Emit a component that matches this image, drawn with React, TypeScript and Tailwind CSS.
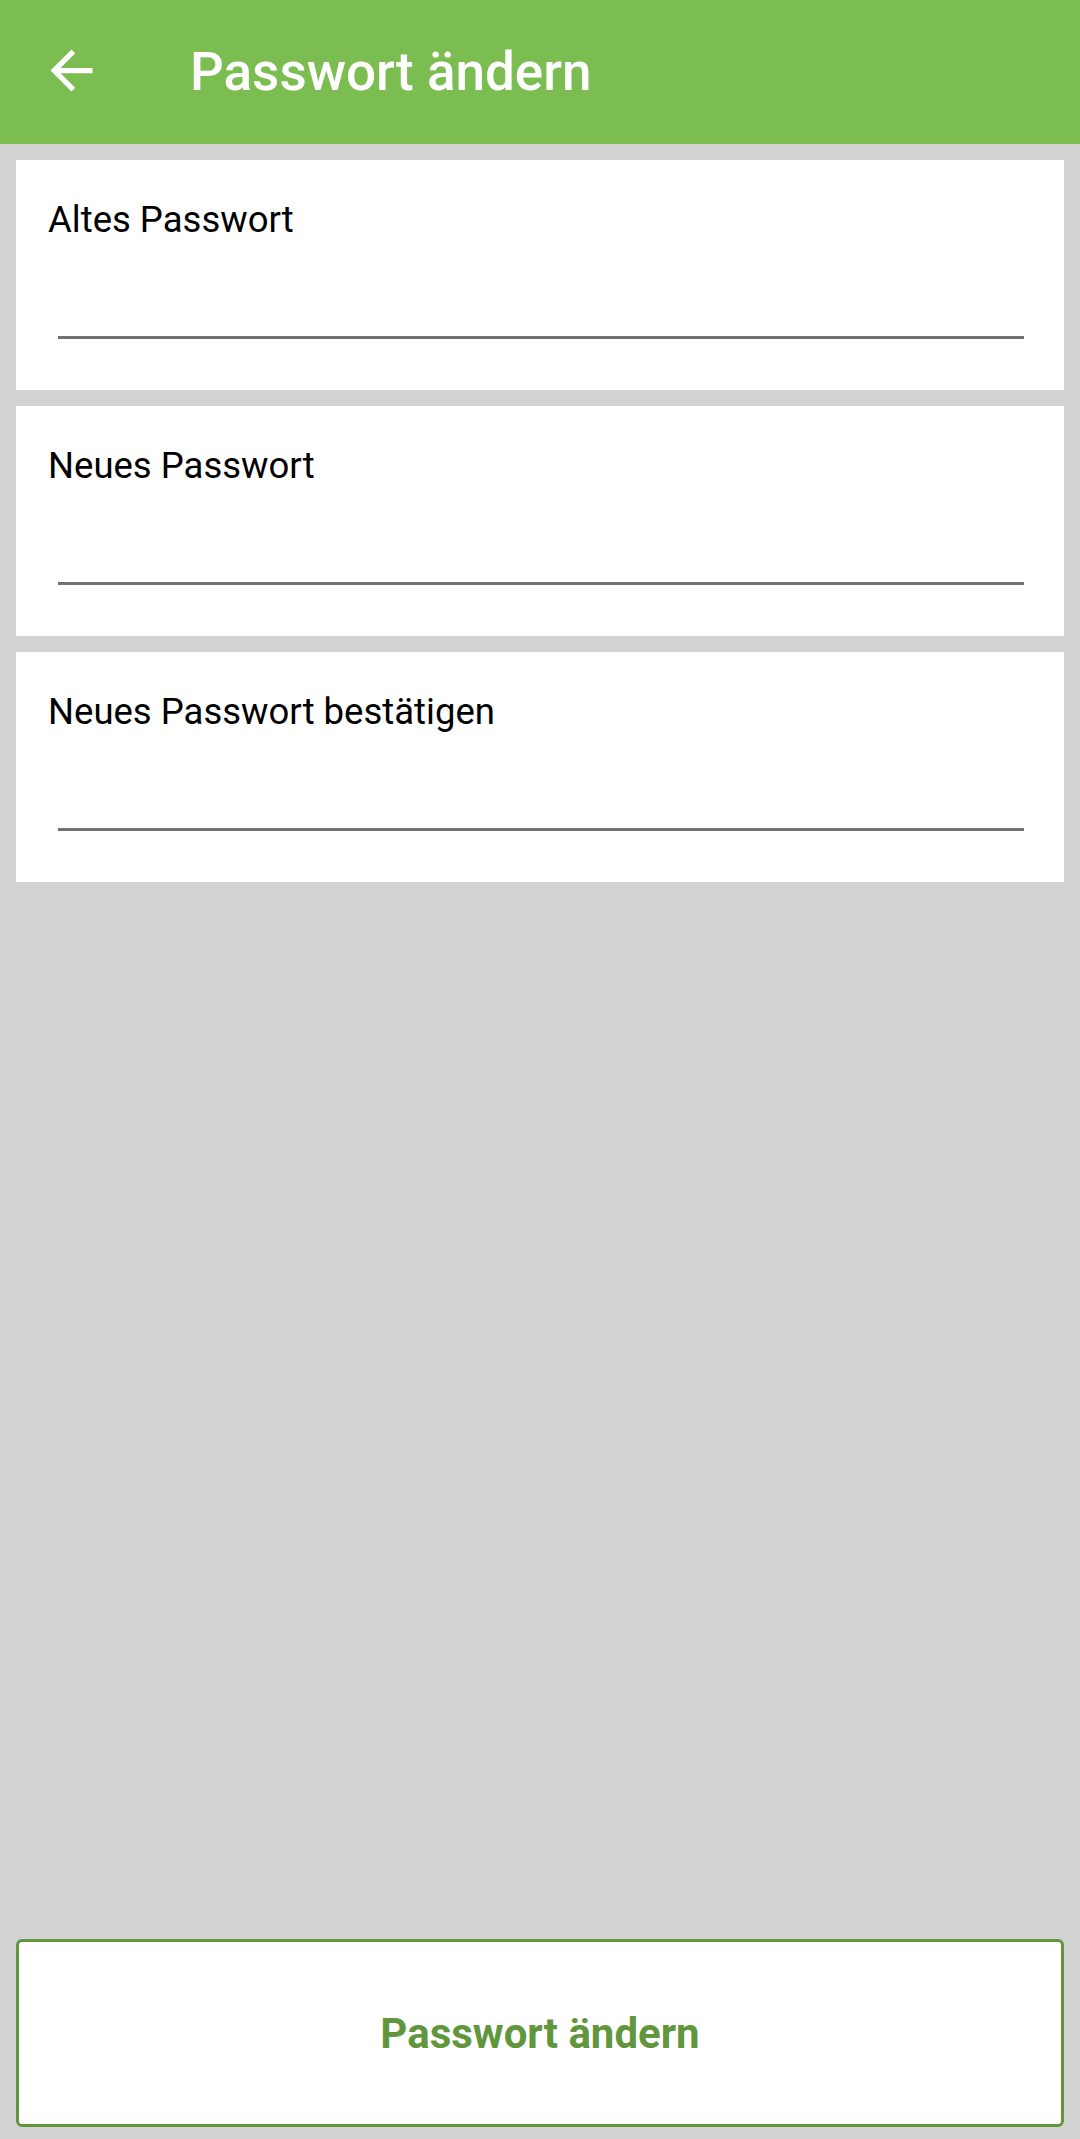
import React from "react";

const fields = ["Altes Passwort", "Neues Passwort", "Neues Passwort bestätigen"];

function ArrowBack() {
  return (
    <svg viewBox="0 0 24 24" className="h-[63px] w-[63px]" fill="#ffffff">
      <path d="M20 11H7.83l5.59-5.59L12 4l-8 8 8 8 1.41-1.41L7.83 13H20v-2z" />
    </svg>
  );
}

function FieldCard({ label }: { label: string }) {
  return (
    <div className="bg-white h-[230px] pt-[40px] pl-[32px] pr-[40px]">
      <label className="block text-[36.5px] leading-[40px] text-black">{label}</label>
      <input
        type="password"
        className="mt-[59px] ml-[10px] block h-[40px] w-[966px] border-b-[3px] border-[#717171] bg-transparent outline-none"
      />
    </div>
  );
}

export default function App() {
  return (
    <div
      className="flex min-h-screen flex-col bg-[#d3d3d3]"
      style={{ fontFamily: "Roboto, 'Noto Sans', sans-serif" }}
    >
      <header className="flex h-[144px] items-center bg-[#7bbd51]">
        <button className="ml-[40px] mt-[-3px] flex h-[63px] w-[63px] items-center justify-center">
          <ArrowBack />
        </button>
        <h1 className="ml-[87px] text-[53px] font-medium leading-none text-white">
          Passwort ändern
        </h1>
      </header>

      <main className="flex flex-1 flex-col gap-[16px] px-[16px] pt-[16px]">
        {fields.map((f) => (
          <FieldCard key={f} label={f} />
        ))}
      </main>

      <div className="px-[16px] pb-[12px]">
        <button className="flex h-[188px] w-full items-center justify-center rounded-[6px] border-[3px] border-[#62963d] bg-white text-[42px] font-bold text-[#62963d]">
          Passwort ändern
        </button>
      </div>
    </div>
  );
}
